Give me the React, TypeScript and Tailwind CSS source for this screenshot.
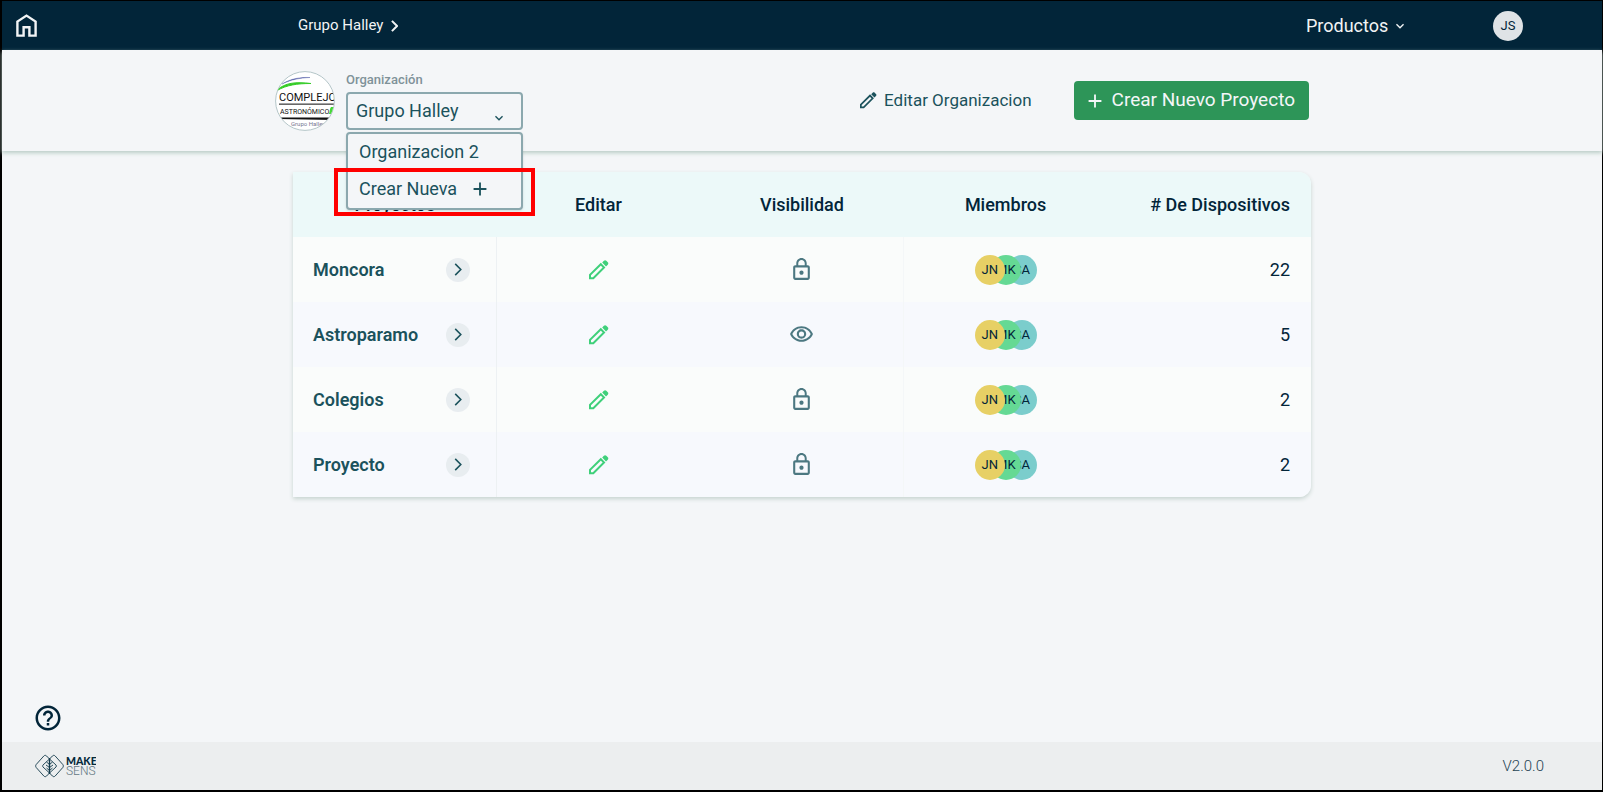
import {
  MdAdd,
  MdHelpOutline,
  MdKeyboardArrowDown,
  MdLockOutline,
  MdOutlineVisibility,
} from "react-icons/md";

type Project = { name: string; isPublic: boolean; devices: number };

const projects: Project[] = [
  { name: "Moncora", isPublic: false, devices: 22 },
  { name: "Astroparamo", isPublic: true, devices: 5 },
  { name: "Colegios", isPublic: false, devices: 2 },
  { name: "Proyecto", isPublic: false, devices: 2 },
];

const members = [
  { initials: "JN", style: "z-[3] bg-[#e7d065]" },
  { initials: "MK", style: "z-[2] bg-[#65d994]" },
  { initials: "SA", style: "z-[1] bg-[#7bcdcc]" },
];

function HomeIcon() {
  return (
    <svg width="21" height="23" viewBox="0 0 21 23" fill="none" stroke="currentColor" strokeWidth="2.4" aria-hidden="true">
      <path d="M1.4 21.6V7.6L10.5 1.6L19.6 7.6V21.6H13.4V13.2H7.6V21.6Z" />
    </svg>
  );
}

function PencilIcon({ size }: { size: number }) {
  return (
    <svg width={size} height={size} viewBox="0 0 20 20" fill="none" aria-hidden="true">
      <path d="M1 18.2V14.9L11.8 4.2L15 7.4L4.3 18.2Z" stroke="currentColor" strokeWidth="2" />
      <path
        d="M13.2 2.5L14.9 0.8C15.6 0.1 16.6 0.1 17.3 0.8L18.8 2.3C19.5 3 19.5 4 18.8 4.7L17 6.4Z"
        fill="currentColor"
      />
    </svg>
  );
}

function Chevron({ width, height, stroke }: { width: number; height: number; stroke: number }) {
  return (
    <svg width={width} height={height} viewBox="0 0 8 14" fill="none" stroke="currentColor" strokeWidth={stroke} aria-hidden="true">
      <path d="M1 1L7 7L1 13" />
    </svg>
  );
}

function OrganizationLogo() {
  return (
    <svg width="60" height="60" viewBox="0 0 60 60" role="img" aria-label="Complejo Astronómico Grupo Halley">
      <defs>
        <clipPath id="logo-circle">
          <circle cx="30" cy="30" r="29" />
        </clipPath>
      </defs>
      <circle cx="30" cy="30" r="29.4" fill="#fff" stroke="#b5c6c9" />
      <g clipPath="url(#logo-circle)">
        <path d="M7 13C15 8 24 6 35 6.5C25 7 16 8.500 7 13Z" fill="#4b57a5" stroke="#4b57a5" strokeWidth="0.4" />
        <path d="M2 19C10 12 20 10.500 36 12.500C22 12.500 12 14 2 19.500Z" fill="#35cc28" stroke="#35cc28" />
        <text x="4" y="30" fontFamily="Roboto, sans-serif" fontSize="11" fill="#111">
          COMPLEJO
        </text>
        <rect x="4" y="32.5" width="56" height="1.3" fill="#444" />
        <text x="5" y="43" fontFamily="Roboto, sans-serif" fontSize="7" fill="#111">
          ASTRONÓMICO
        </text>
        <path d="M56 36H60V43H54C55 40 54.500 38 56 36Z" fill="#45d936" />
        <path d="M4 46.5H58V49L30 48.5L4 48Z" fill="#111" />
        <text x="16" y="54.5" fontFamily="Roboto, sans-serif" fontSize="6" fill="#777792">
          Grupo Halley
        </text>
      </g>
    </svg>
  );
}

function MakeSensLogo() {
  return (
    <svg width="62" height="24" viewBox="0 0 62 24" role="img" aria-label="Make Sens">
      <g fill="none" stroke="#12394a" strokeWidth="0.9">
        <path d="M15.500 5L12.600 2C11.800 1.100 10.600 1.100 9.800 2L2.200 10.500C1.500 11.400 1.500 12.600 2.200 13.500L9.800 22C10.600 22.900 11.800 22.900 12.600 22L15.500 19" />
        <path d="M15.500 5L18.400 2C19.200 1.100 20.400 1.100 21.200 2L28.800 10.500C29.500 11.400 29.500 12.600 28.800 13.500L21.200 22C20.400 22.900 19.200 22.900 18.400 22L15.500 19" />
        <path d="M15.500 5L9 11C8.500 11.600 8.500 12.400 9 13L15.500 19L22 13C22.500 12.400 22.500 11.600 22 11Z" />
        <path d="M15.500 4V20" strokeWidth="1.4" />
        <path d="M12.500 8L15.500 10.500L18.500 8M12 11L15.500 13.500L19 11M12.500 14L15.500 16.500L18.500 14" />
      </g>
      <text x="32" y="11" fontFamily="Lato, sans-serif" fontSize="10.500" fontWeight="900" fill="#062a3c">
        MAKE
      </text>
      <text x="32" y="21" fontFamily="Roboto, sans-serif" fontSize="12" fontWeight="300" fill="#62767f">
        SENS
      </text>
    </svg>
  );
}

function OrganizationPicker() {
  return (
    <div className="relative w-[177px]">
      <label htmlFor="organization" className="block h-5 text-[13px] leading-4 font-medium text-[#7f9299]">
        Organización
      </label>
      <div className="relative">
        <select
          id="organization"
          className="block h-[38px] w-full appearance-none rounded border-2 border-[#8ba8ae] bg-[#f4f6f8] pl-2 text-[18px] text-[#1b525c]"
        >
          <option>Grupo Halley</option>
        </select>
        <MdKeyboardArrowDown className="pointer-events-none absolute right-4 bottom-1 size-4 text-[#1b525c]" />
      </div>
      <ul className="absolute top-full left-0 z-10 mt-0.5 w-full rounded border-2 border-[#8ba8ae] bg-[#f4f6f8] text-[18px] text-[#1b525c] shadow-sm">
        <li>
          <button type="button" className="flex h-9 w-full items-center pl-[11px]">
            Organizacion 2
          </button>
        </li>
        <li className="relative">
          <button type="button" className="flex h-[38px] w-full items-center gap-3 pl-[11px]">
            Crear Nueva
            <MdAdd className="size-[22px]" />
          </button>
          <span className="pointer-events-none absolute -inset-x-3.5 -top-0.5 -bottom-2 border-4 border-[#ff0000]" />
        </li>
      </ul>
    </div>
  );
}

export default function App() {
  return (
    <div className="flex min-h-screen flex-col border-t border-r border-b-2 border-l-2 border-black bg-[#f4f6f8] font-[Roboto,sans-serif]">
      <header className="grid h-[49px] grid-cols-[1fr_minmax(0,1008px)_1fr] items-center bg-[#022539] text-[#f2f4f5]">
        <a href="#inicio" aria-label="Inicio" className="pl-3.5">
          <HomeIcon />
        </a>
        <a href="#grupo-halley" className="flex items-center gap-2 text-[15px]">
          Grupo Halley
          <Chevron width={7} height={12} stroke={2.4} />
        </a>
        <div className="flex items-center justify-between pr-[79px]">
          <button type="button" className="flex items-center gap-1 text-[18px]">
            Productos
            <MdKeyboardArrowDown className="size-4" />
          </button>
          <button type="button" className="size-[30px] rounded-full bg-[#dfe3e6] text-[13px] text-[#022539]">
            JS
          </button>
        </div>
      </header>

      <section className="flex h-[101px] justify-center pr-5 shadow-[0_2px_4px_#b9cdc6]">
        <div className="flex w-full max-w-[1034px] items-center justify-between">
          <div className="flex items-center gap-[11px]">
            <OrganizationLogo />
            <OrganizationPicker />
          </div>
          <div className="flex items-center gap-[42px]">
            <button type="button" className="flex items-center gap-[7px] text-[17px] text-[#1b525c]">
              <PencilIcon size={17} />
              Editar Organizacion
            </button>
            <button
              type="button"
              className="flex h-[39px] items-center gap-1.5 rounded bg-[#2d9558] pr-3.5 pl-2.5 text-[19px] text-[#f4f6f8]"
            >
              <MdAdd className="size-[22px]" />
              Crear Nuevo Proyecto
            </button>
          </div>
        </div>
      </section>

      <main className="flex flex-1 justify-center pt-[21px]">
        <div className="w-full max-w-[1018px]">
          <div className="overflow-hidden rounded-r-xl shadow-[0_2px_4px_#c6d3cf]">
            <table className="w-full table-fixed text-[18px] text-[#022539]">
              <thead>
                <tr className="h-[65px] bg-[#ecf9f9]">
                  <th className="font-medium">Proyectos</th>
                  <th className="font-medium">Editar</th>
                  <th className="font-medium">Visibilidad</th>
                  <th className="font-medium">Miembros</th>
                  <th className="pr-[21px] text-right font-medium">
                    # De Dispositivos
                  </th>
                </tr>
              </thead>
              <tbody>
                {projects.map((project) => (
                  <tr key={project.name} className="h-[65px] odd:bg-[#fafcfb] even:bg-[#f7f9fd]">
                    <td className="border-r border-[#edf1f3] pr-[26px] pl-5">
                      <div className="flex items-center justify-between font-semibold text-[#1b525c]">
                        {project.name}
                        <button
                          type="button"
                          aria-label={`Abrir ${project.name}`}
                          className="flex size-6 items-center justify-center rounded-full bg-[#e8edf0]"
                        >
                          <Chevron width={8} height={13} stroke={1.7} />
                        </button>
                      </div>
                    </td>
                    <td>
                      <button type="button" aria-label={`Editar ${project.name}`} className="mx-auto block text-[#3fd07a]">
                        <PencilIcon size={20} />
                      </button>
                    </td>
                    <td className="border-r border-[#f4f7f8] text-[#4c7881]">
                      {project.isPublic ? (
                        <MdOutlineVisibility className="mx-auto size-[25px]" />
                      ) : (
                        <MdLockOutline className="mx-auto size-[25px]" />
                      )}
                    </td>
                    <td>
                      <div className="isolate flex justify-center -space-x-3.5">
                        {members.map((member) => (
                          <span
                            key={member.initials}
                            className={`relative flex size-[30px] items-center justify-center rounded-full text-[13px] ${member.style}`}
                          >
                            {member.initials}
                          </span>
                        ))}
                      </div>
                    </td>
                    <td className="pr-[21px] text-right">{project.devices}</td>
                  </tr>
                ))}
              </tbody>
            </table>
          </div>
        </div>
      </main>

      <div className="flex px-[31px] pb-[9px]">
        <button type="button" aria-label="Ayuda" className="text-[#022539]">
          <MdHelpOutline className="size-[30px]" />
        </button>
      </div>
      <footer className="flex h-12 items-center justify-between bg-[#eceeef] pr-[58px] pl-8">
        <MakeSensLogo />
        <span className="text-[15px] font-light text-[#1f4453]">V2.0.0</span>
      </footer>
    </div>
  );
}
